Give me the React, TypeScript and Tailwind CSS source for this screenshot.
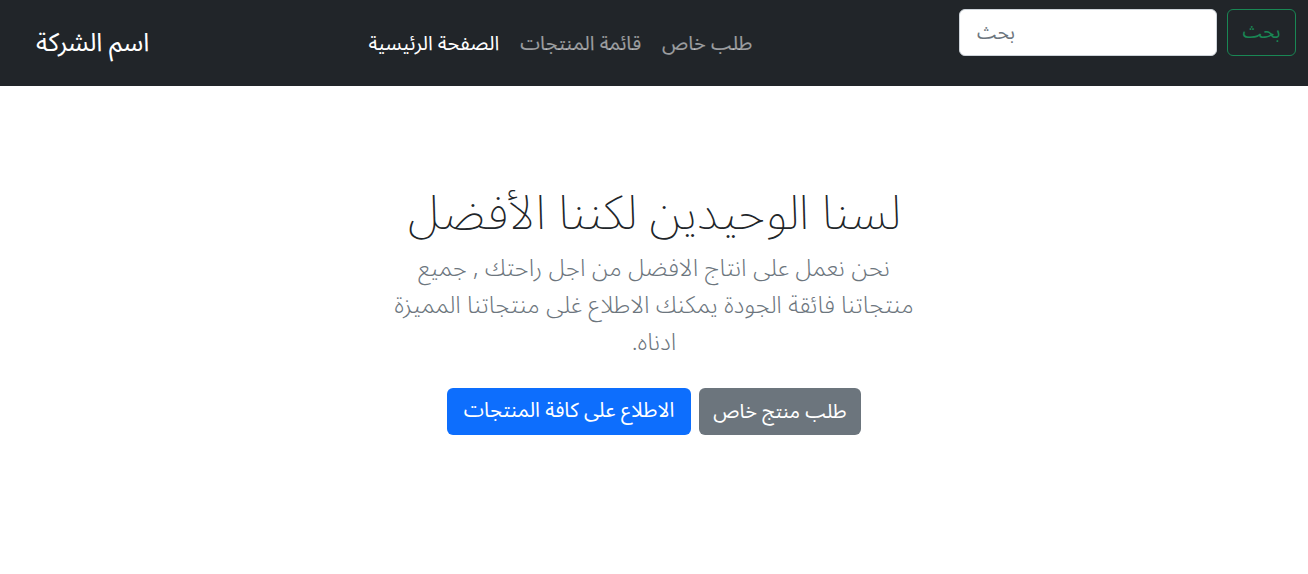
import React from "react";

const font = { fontFamily: '"Noto Sans Arabic", "DejaVu Sans", "Noto Sans", sans-serif' };

export default function App() {
  return (
    <div className="min-h-[574px] bg-white" style={font}>
      <nav className="h-[86px] bg-[#212529] flex items-start pl-[36px] pr-[12px]">
        <div className="mt-[26px] text-[25.5px] leading-[34px] text-white" dir="rtl">اسم الشركة</div>
        <div className="ml-[219px] mt-[28px] flex gap-[21px] text-[20px] leading-[32px]">
          <a className="text-white" dir="rtl">الصفحة الرئيسية</a>
          <a className="text-white/55" dir="rtl">قائمة المنتجات</a>
          <a className="text-white/55" dir="rtl">طلب خاص</a>
        </div>
        <div className="ml-auto mt-[9px] flex gap-[10px]">
          <input
            placeholder="بحث"
            className="w-[258px] h-[47px] rounded-[6px] bg-white border border-[#ced4da] px-[17px] text-[19px] text-left text-[#212529] placeholder:text-[#6c757d] outline-none"
          />
          <button className="w-[69px] h-[47px] rounded-[6px] border border-[#198754] text-[#198754] text-[19px]" dir="rtl">بحث</button>
        </div>
      </nav>
      <main className="flex flex-col items-center pt-[92px]" dir="rtl">
        <h1 className="text-[47.5px] leading-[72px] font-extralight text-[#212529]">لسنا الوحيدين لكننا الأفضل</h1>
        <p className="text-[24px] leading-[37px] text-[#6c757d] font-light text-center">
          نحن نعمل على انتاج الافضل من اجل راحتك , جميع
          <br />
          منتجاتنا فائقة الجودة يمكنك الاطلاع غلى منتجاتنا المميزة
          <br />
          ادناه.
        </p>
        <div className="mt-[27px] flex gap-[8px]" dir="ltr">
          <button className="w-[244px] h-[47px] rounded-[6px] bg-[#0d6efd] text-white text-[20.5px]" dir="rtl">الاطلاع على كافة المنتجات</button>
          <button className="w-[162px] h-[47px] rounded-[6px] bg-[#6c757d] text-white text-[20px]" dir="rtl">طلب منتج خاص</button>
        </div>
      </main>
    </div>
  );
}
